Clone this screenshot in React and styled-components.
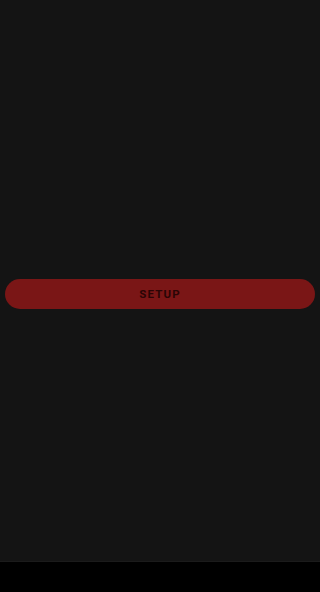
import styled, { createGlobalStyle } from "styled-components";

const GlobalStyle = createGlobalStyle`
  html, body {
    margin: 0;
    padding: 0;
    background: #000;
  }
  body {
    font-family: Roboto, "Liberation Sans", sans-serif;
  }
`;

const App = () => {
  return (
    <>
      <GlobalStyle />
      <Screen>
        <Main>
          <SetupButton type="button">SETUP</SetupButton>
        </Main>
        <NavBar />
      </Screen>
    </>
  );
};

const Screen = styled.div`
  width: 100%;
  height: 592px;
  display: flex;
  flex-direction: column;
  background: #000;
`;

const Main = styled.div`
  height: 562px;
  box-sizing: border-box;
  padding: 279px 5px 0;
  background: #141414;
  border-bottom: 1px solid #1b1b1b;
`;

const SetupButton = styled.button`
  display: block;
  width: 100%;
  height: 30px;
  border: none;
  border-radius: 15px;
  background: #7a1616;
  color: #2a0505;
  font-family: Roboto, "Liberation Sans", sans-serif;
  font-size: 11.5px;
  font-weight: 700;
  letter-spacing: 1.1px;
  padding: 0;
`;

const NavBar = styled.div`
  flex: 1;
  background: #000;
`;

export default App;
